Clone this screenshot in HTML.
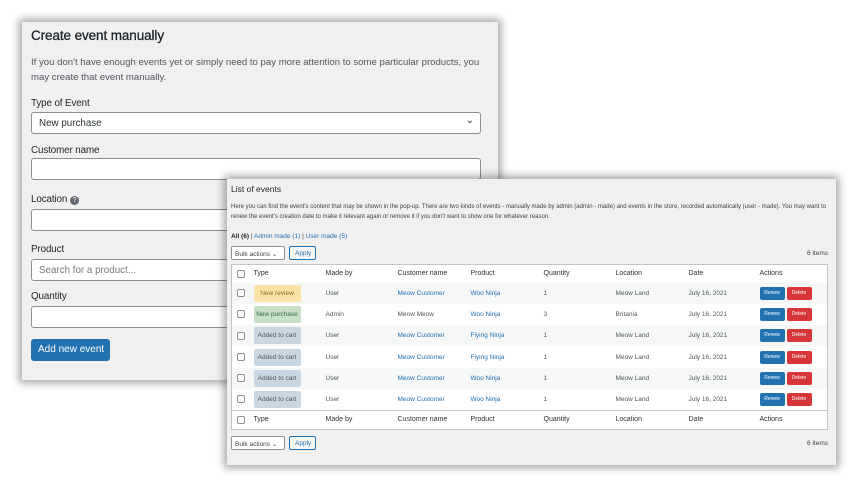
<!DOCTYPE html>
<html><head><style>
*{box-sizing:border-box;margin:0;padding:0}
body{width:864px;height:500px;background:#fff;position:relative;font-family:"Liberation Sans",sans-serif;overflow:hidden;color:#3c434a}
.p1{position:absolute;left:22px;top:22px;width:476px;height:358px;background:#f0f0f1;box-shadow:0 0 8px 3px rgba(0,0,0,.35)}
.p1 h1{position:absolute;left:9px;top:6px;font-size:13.5px;font-weight:normal;color:#1d2327;letter-spacing:-0.1px;-webkit-text-stroke:0.3px #1d2327}
.p1 .d{position:absolute;left:9px;top:33px;width:470px;font-size:9.6px;line-height:15px;color:#50575e;white-space:nowrap}
.lb{position:absolute;left:9px;font-size:9.8px;color:#1d2327;letter-spacing:-0.1px}
.in{position:absolute;left:9px;width:450px;height:22px;background:#fff;border:1px solid #8c8f94;border-radius:3px;font-size:9.8px;padding:5px 7px;color:#2c3338}
.btn{position:absolute;left:9px;top:317px;width:79px;height:22px;background:#2271b1;color:#fff;border-radius:3px;font-size:10px;padding:5px 7px;white-space:nowrap}
.p2{position:absolute;left:227px;top:179px;width:609px;height:286px;background:#f0f0f1;box-shadow:0 0 8px 3px rgba(0,0,0,.35);font-size:6.5px}
.a{color:#2271b1}
.sel{position:absolute;width:54px;height:14px;background:#fff;border:1px solid #8c8f94;border-radius:2px;font-size:6.5px;padding:3px 3px}
.ap{position:absolute;width:27px;height:14px;border:1px solid #2271b1;border-radius:2px;color:#2271b1;font-size:6.5px;padding:3px 5px;background:#f6f7f7}
table{position:absolute;left:4px;top:85px;width:597px;border-collapse:collapse;background:#fff;border:1px solid #c3c4c7}
td{height:21.3px;padding:0;vertical-align:middle;font-size:6.5px;color:#50575e}
tr.h td{height:18px;font-size:7px;color:#2c3338}
tr.alt td{background:#f6f7f7}
.cb{display:inline-block;width:8px;height:8px;border:1px solid #8c8f94;border-radius:2px;background:#fff;margin-left:5px;vertical-align:middle}
.bd{display:inline-block;width:47px;height:17px;border-radius:2px;text-align:center;line-height:17px;font-size:6.5px;vertical-align:middle}
.r,.x{display:inline-block;width:25px;height:13px;color:#fff;border-radius:2px;text-align:center;line-height:13px;font-size:5px;vertical-align:middle}
.r{background:#2271b1}.x{background:#d63638;margin-left:2px}
</style></head><body>
<div class="p1">
<h1>Create event manually</h1>
<div class="d">If you don't have enough events yet or simply need to pay more attention to some particular products, you<br>may create that event manually.</div>
<div class="lb" style="top:76px">Type of Event</div>
<div class="in" style="top:90px">New purchase<span style="position:absolute;right:6px;top:2px;font-size:10px">&#8964;</span></div>
<div class="lb" style="top:123px">Customer name</div>
<div class="in" style="top:136px"></div>
<div class="lb" style="top:172px">Location <span style="display:inline-block;width:9px;height:9px;border-radius:50%;background:#646970;color:#fff;font-size:7px;text-align:center;line-height:9px">?</span></div>
<div class="in" style="top:187px"></div>
<div class="lb" style="top:222px">Product</div>
<div class="in" style="top:237px;color:#777">Search for a product...</div>
<div class="lb" style="top:269px">Quantity</div>
<div class="in" style="top:284px"></div>
<div class="btn">Add new event</div>
</div>
<div class="p2">
<div style="position:absolute;left:4px;top:5px;font-size:8.5px;color:#1d2327">List of events</div>
<div style="position:absolute;left:4px;top:23px;width:600px;line-height:10px;font-size:6px">Here you can find the event's content that may be shown in the pop-up. There are two kinds of events - manually made by admin (admin - made) and events in the store, recorded automatically (user - made). You may want to renew the event's creation date to make it relevant again or remove it if you don't want to show one for whatever reason.</div>
<div style="position:absolute;left:4px;top:54px;font-size:6.5px"><b style="font-weight:600;color:#1d2327">All (6)</b> | <span class="a">Admin made (1)</span> | <span class="a">User made (5)</span></div>
<div class="sel" style="left:4px;top:67px">Bulk actions &#8964;</div>
<div class="ap" style="left:62px;top:67px">Apply</div>
<div style="position:absolute;right:8px;top:71px">6 items</div>
<table>
<tr class="h"><td style="width:22px"><span class="cb"></span></td><td style="width:72px">Type</td><td style="width:72px">Made by</td><td style="width:73px">Customer name</td><td style="width:73px">Product</td><td style="width:72px">Quantity</td><td style="width:73px">Location</td><td style="width:71px">Date</td><td>Actions</td></tr>
<tr class="alt"><td><span class="cb"></span></td><td><span class="bd" style="background:#fbe3a8;color:#8a6d1c">New review</span></td><td>User</td><td class="a">Meow Customer</td><td class="a">Woo Ninja</td><td>1</td><td>Meow Land</td><td>July 16, 2021</td><td><span class="r">Renew</span><span class="x">Delete</span></td></tr>
<tr><td><span class="cb"></span></td><td><span class="bd" style="background:#c6e1c6;color:#3d6b3d">New purchase</span></td><td>Admin</td><td>Meow Meow</td><td class="a">Woo Ninja</td><td>3</td><td>Britania</td><td>July 16, 2021</td><td><span class="r">Renew</span><span class="x">Delete</span></td></tr>
<tr class="alt"><td><span class="cb"></span></td><td><span class="bd" style="background:#c8d7e1;color:#4b5a66">Added to cart</span></td><td>User</td><td class="a">Meow Customer</td><td class="a">Flying Ninja</td><td>1</td><td>Meow Land</td><td>July 16, 2021</td><td><span class="r">Renew</span><span class="x">Delete</span></td></tr>
<tr><td><span class="cb"></span></td><td><span class="bd" style="background:#c8d7e1;color:#4b5a66">Added to cart</span></td><td>User</td><td class="a">Meow Customer</td><td class="a">Flying Ninja</td><td>1</td><td>Meow Land</td><td>July 16, 2021</td><td><span class="r">Renew</span><span class="x">Delete</span></td></tr>
<tr class="alt"><td><span class="cb"></span></td><td><span class="bd" style="background:#c8d7e1;color:#4b5a66">Added to cart</span></td><td>User</td><td class="a">Meow Customer</td><td class="a">Woo Ninja</td><td>1</td><td>Meow Land</td><td>July 16, 2021</td><td><span class="r">Renew</span><span class="x">Delete</span></td></tr>
<tr><td><span class="cb"></span></td><td><span class="bd" style="background:#c8d7e1;color:#4b5a66">Added to cart</span></td><td>User</td><td class="a">Meow Customer</td><td class="a">Woo Ninja</td><td>1</td><td>Meow Land</td><td>July 16, 2021</td><td><span class="r">Renew</span><span class="x">Delete</span></td></tr>
<tr class="h" style="border-top:1px solid #c3c4c7"><td style="height:19px"><span class="cb"></span></td><td>Type</td><td>Made by</td><td>Customer name</td><td>Product</td><td>Quantity</td><td>Location</td><td>Date</td><td>Actions</td></tr>
</table>
<div class="sel" style="left:4px;top:257px">Bulk actions &#8964;</div>
<div class="ap" style="left:62px;top:257px">Apply</div>
<div style="position:absolute;right:8px;top:261px">6 items</div>
</div>
</body></html>
